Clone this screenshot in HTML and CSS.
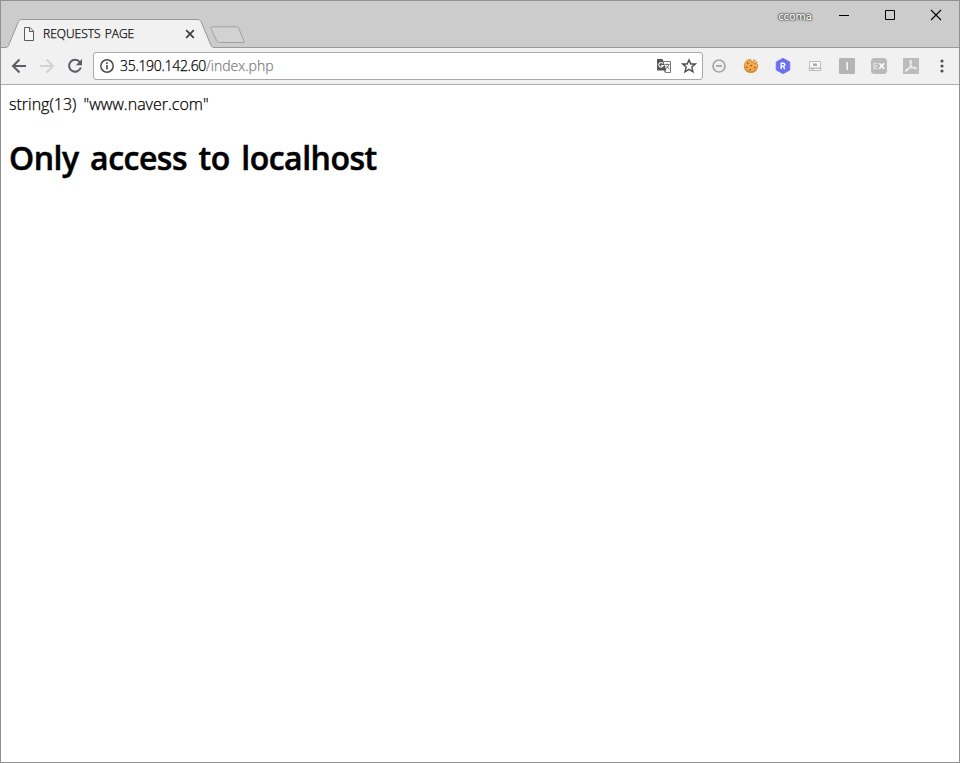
FILE: index.html
```html
<!DOCTYPE html>
<html lang="en">
<head>
<meta charset="utf-8">
<title>REQUESTS PAGE</title>
<link rel="stylesheet" href="styles.css">
</head>
<body>
<div class="window">
  <header class="titlebar">
    <div class="tab">
      <svg class="tab-shape" width="208" height="29" viewBox="0 0 208 29"><path d="M0 28.500Q1.500 28.500 2.500 26.500L12.500 2.500Q13.500 .5 15.500 .5H192Q194 .5 195 2.500L205 26.500Q206 28.500 208 28.500V29H0Z" fill="#f1f1f1"/><path d="M0 28.500Q1.500 28.500 2.500 26.500L12.500 2.500Q13.500 .5 15.500 .5H192Q194 .5 195 2.500L205 26.500Q206 28.500 208 28.500" fill="none" stroke="#999"/></svg>
      <svg class="tab-file" width="12" height="14" viewBox="0 0 12 14"><path d="M1.500 .5H7L10.500 4V13.500H1.500ZM6.500 .5V4.500H10.500" fill="#f7f7f7" stroke="#5a5a5a"/></svg>
      <span class="tab-title">REQUESTS PAGE</span>
      <svg class="tab-close" width="10" height="10" viewBox="0 0 10 10"><path d="M1.200 1.200L8.800 8.800M8.800 1.200L1.200 8.800" stroke="#3c3c3c" stroke-width="1.700"/></svg>
    </div>
    <svg class="new-tab" width="36" height="18" viewBox="0 0 36 18"><path d="M2.500 .8H26Q28 .8 28.800 2.500L34 15Q34.500 16.500 33 16.500H9.500Q7.500 16.500 6.800 15L1 2.500Q.4 .8 2.500 .8Z" fill="#d2d2d2" stroke="#a0a0a0"/></svg>
    <span class="user">ccoma</span>
    <div class="controls">
      <svg width="46" height="28" viewBox="0 0 46 28"><path d="M18 14.500H28" stroke="#000"/></svg>
      <svg width="46" height="28" viewBox="0 0 46 28"><path d="M18.500 9.500H27.500V18.500H18.500Z" fill="none" stroke="#000"/></svg>
      <svg width="46" height="28" viewBox="0 0 46 28"><path d="M18 9L28 19M28 9L18 19" stroke="#000" stroke-width="1.100"/></svg>
    </div>
  </header>
  <div class="toolbar">
    <div class="nav">
      <svg width="16" height="16" viewBox="0 0 16 16"><path d="M15 8H2.500M8.500 1.500L2 8L8.500 14.500" fill="none" stroke="#5a5d62" stroke-width="2"/></svg>
      <svg width="16" height="16" viewBox="0 0 16 16"><path d="M1 8H13.500M7.500 1.500L14 8L7.500 14.500" fill="none" stroke="#d2d3d4" stroke-width="2"/></svg>
      <svg width="16" height="16" viewBox="0 0 16 16"><path d="M12.800 4A6 6 0 1 0 13.800 9.500" fill="none" stroke="#5a5d62" stroke-width="2"/><path d="M15 1V7.200H8.800Z" fill="#5a5d62"/></svg>
    </div>
    <div class="omnibox">
      <svg width="16" height="16" viewBox="0 0 16 16"><circle cx="8" cy="8" r="6.200" fill="none" stroke="#4a4a4a" stroke-width="1.500"/><path d="M7.200 7H8.800V11.500H7.200ZM7.200 4.300H8.800V5.900H7.200Z" fill="#4a4a4a"/></svg>
      <span class="url">35.190.142.60<span class="path">/index.php</span></span>
      <svg class="translate" width="16" height="16" viewBox="0 0 16 16"><path d="M7 3.500H14.500V14.500H9.500" fill="#fff" stroke="#777"/><path d="M1 1H6.500L10.500 12.500H2Q1 12.500 1 11.500Z" fill="#555"/><path d="M7 5.600A2.300 2.300 0 1 0 7.200 7.500H5" fill="none" stroke="#fff" stroke-width="1.100"/><path d="M7.800 12.500H10L9 15Z" fill="#555"/><path d="M9 6.500H13.500M11.300 5.500V6.500M13 6.500Q12 9.500 9.800 10.500M10.500 8Q11.500 10 13.500 11" fill="none" stroke="#777"/></svg>
      <svg width="16" height="16" viewBox="0 0 16 16"><path d="M8 1.900L9.800 6H14.300L10.800 9.100L12 13.800L8 11.300L4 13.800L5.200 9.100L1.700 6H6.200Z" fill="none" stroke="#4c4c50" stroke-width="1.400"/></svg>
    </div>
    <div class="extensions">
      <svg width="16" height="16" viewBox="0 0 16 16"><circle cx="8" cy="8" r="6" fill="#eee" stroke="#a5a5a5" stroke-width="1.700"/><path d="M5 8H11" stroke="#a0a0a0" stroke-width="1.700"/></svg>
      <svg width="16" height="16" viewBox="0 0 16 16"><path d="M5 1.500Q7 .5 8.500 2Q9 4 11 3.500Q11.500 5.500 13.500 5Q15.500 6 15 9Q14 14.500 8.500 15Q2.500 15 1 10Q0 4 5 1.500Z" fill="#d7852e"/><path d="M5 2Q7 1 8 2.500Q8.500 4.800 10.500 4.500Q11 6.500 14 6Q15 8 13.500 11Q10 14 6 13Q1.500 11 1.500 7Q2 3.500 5 2Z" fill="#f0a94e"/><path d="M10 1.500H12.500V3.500H10ZM12.500 3.500H14.500V5H12.500Z" fill="#e39a45"/><path d="M4 4.500H5.300V5.800H4ZM7.500 7H8.800V8.300H7.500ZM3 8.500H4.300V9.800H3ZM11 9H12.300V10.300H11ZM6.500 11H7.800V12.300H6.500Z" fill="#75401d"/></svg>
      <svg width="16" height="16" viewBox="0 0 16 16"><path d="M8 .3L14.800 4V12L8 15.700L1.200 12V4Z" fill="#6b70ef" stroke="#6b70ef" stroke-width=".8" stroke-linejoin="round"/><path d="M6.200 11V5.200H8.200Q9.900 5.200 9.900 6.800Q9.900 8.200 8.200 8.200H6.200M8 8.200L9.900 11" fill="none" stroke="#fff" stroke-width="1.400"/></svg>
      <svg width="16" height="16" viewBox="0 0 16 16"><path d="M2.500 3.500H13.500V10H2.500Z" fill="#fafafa" stroke="#bbb"/><path d="M2 10.500H14V12.500H2Z" fill="#fff" stroke="#bbb"/><path d="M6 5.500H10V8H6ZM4 10.500H7V11.500H4Z" fill="#aaa"/></svg>
      <svg width="16" height="16" viewBox="0 0 16 16"><rect width="16" height="16" rx="1" fill="#b4b4b4"/><path d="M7.300 4H9V12H7.300Z" fill="#f1f1f1"/></svg>
      <svg width="16" height="16" viewBox="0 0 16 16"><rect width="16" height="16" rx="3.500" fill="#bababa"/><path d="M6.500 5.500H3V10.500H6.500M3 8H6.500" fill="none" stroke="#dedede" stroke-width="1.300"/><path d="M8.300 5.200L13.200 10.800M13.200 5.200L8.300 10.800" stroke="#fff" stroke-width="1.700"/></svg>
      <svg width="16" height="16" viewBox="0 0 16 16"><rect width="16" height="16" fill="#bcbcbc"/><path d="M7.500 2.500Q9 2.500 8 6Q6.500 11 3.500 13Q1.500 13.500 3.500 11.500Q7 9 12.500 9.500Q15 10.500 12 11Q8 9.500 7 4.500Q6.800 2.500 7.500 2.500Z" fill="none" stroke="#eee" stroke-width="1.100"/></svg>
      <svg class="menu" width="4" height="16" viewBox="0 0 4 16"><circle cx="2" cy="3" r="1.600"/><circle cx="2" cy="8" r="1.600"/><circle cx="2" cy="13" r="1.600"/></svg>
    </div>
  </div>
  <main class="page">
    <div class="dump">string(13) "www.naver.com"</div>
    <h1>Only access to localhost</h1>
  </main>
</div>
</body>
</html>
```
FILE: styles.css
```css
* { box-sizing: border-box; }
body {
  margin: 0;
  font-family: "Open Sans", "Noto Sans", sans-serif;
  font-weight: 300;
  color: #000;
  -webkit-text-stroke: 0.25px currentColor;
}
svg { display: block; flex: none; }
.window {
  display: flex;
  flex-direction: column;
  height: 763px;
  border: 1px solid #919191;
  background: #fff;
}
.titlebar {
  display: flex;
  align-items: flex-start;
  height: 47px;
  background: #ccc;
  border-bottom: 1px solid #999;
}
.tab {
  position: relative;
  display: flex;
  align-items: center;
  width: 208px;
  height: 29px;
  margin: 18px 0 0 5px;
  padding: 0 19px 0 17px;
}
.tab-shape { position: absolute; left: 0; top: 0; }
.tab-file, .tab-title, .tab-close { position: relative; }
.tab-title {
  flex: 1;
  margin-left: 8px;
  font-size: 12px;
  line-height: 16px;
  word-spacing: 1px;
}
.new-tab { margin: 25px 0 0 -4px; }
.user {
  margin: 7px 9px 0 auto;
  font-family: "Noto Sans", sans-serif;
  font-size: 11px;
  font-weight: 400;
  line-height: 16px;
  color: #fff;
  text-shadow: 0 0 1px #222, 0 0 1px #222, 0 0 2px #333, 0 0 2px #333;
}
.controls { display: flex; }
.toolbar {
  display: flex;
  align-items: center;
  height: 37px;
  background: #f1f1f1;
  border-bottom: 1px solid #b0b0b0;
}
.nav {
  display: flex;
  gap: 12px;
  margin: 0 10px;
}
.omnibox {
  display: flex;
  align-items: center;
  width: 610px;
  height: 28px;
  padding: 0 5px;
  border: 1px solid #a9a9a9;
  border-radius: 3px;
  background: #fff;
}
.url {
  flex: 1;
  margin-left: 5px;
  font-size: 14px;
  line-height: 20px;
  letter-spacing: -0.3px;
}
.path { color: #808080; letter-spacing: 0; }
.translate { margin-right: 9px; }
.extensions {
  display: flex;
  gap: 16px;
  margin-left: 8px;
}
.menu { margin-left: 4.5px; fill: #505057; }
.page { padding: 8px; }
.dump {
  font-size: 16px;
  line-height: 23px;
  word-spacing: 3px;
}
h1 {
  margin: 19px 0 0;
  font-size: 32px;
  line-height: 46px;
  font-weight: 600;
  letter-spacing: -0.5px;
  word-spacing: 3.7px;
  -webkit-text-stroke-width: 0.5px;
}
```
